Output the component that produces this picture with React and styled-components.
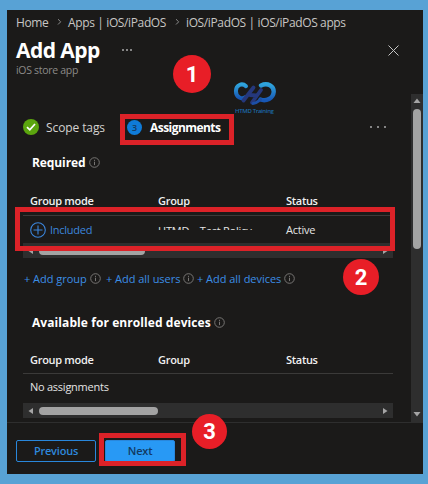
import styled, { createGlobalStyle } from 'styled-components';

const addLinks = [
    { label: '+ Add group', width: 82 },
    { label: '+ Add all users', width: 91 },
    { label: '+ Add all devices', width: 110 },
];

function InfoIcon() {
    return (
        <svg width="11" height="11" viewBox="0 0 11 11" fill="none" stroke="#777573">
            <circle cx="5.5" cy="5.5" r="4.8" />
            <path d="M5.5 4.7v3.4M5.5 2.8v1.1" />
        </svg>
    );
}

function Chevron() {
    return (
        <svg width="5" height="7" viewBox="0 0 5 7" fill="none" stroke="#8a8a8a">
            <path d="M1 .2l2.7 2.6L1 5.5" />
        </svg>
    );
}

function Arrow({ points }) {
    return (
        <svg width="8" height="8" viewBox="0 0 8 8" fill="#a5a5a5">
            <polygon points={points} />
        </svg>
    );
}

function Logo() {
    return (
        <svg width="44" height="26" viewBox="0 0 44 26" fill="none" strokeLinecap="round">
            <defs>
                <linearGradient id="ring" x1="0" y1="0" x2="0" y2="1">
                    <stop offset="0" stopColor="#2fa4dc" />
                    <stop offset="1" stopColor="#1757b5" />
                </linearGradient>
            </defs>
            <path d="M13 5.2C9 1.5 3 4 2.9 10C2.9 16.5 9 19 12.5 16" stroke="url(#ring)" strokeWidth="4" />
            <path d="M28 4.4C35 1.2 41 5.5 40.7 11C40.3 17.5 33 20.5 27.5 18.5" stroke="url(#ring)" strokeWidth="4.4" />
            <path d="M20.5 6.5L10.5 19.5M28 9L19 21.5M17 14L23 14.5" stroke="#25387c" strokeWidth="3.8" />
            <path d="M27.5 18.5C25 20 23.5 22.5 20 22.5" stroke="#1c4fa6" strokeWidth="3" />
        </svg>
    );
}

function HorizontalBar({ thumb }) {
    return (
        <BarTrack>
            <Arrow points="6,1 6,7 1.5,4" />
            <BarThumb $width={thumb} />
            <Arrow points="2,1 2,7 6.5,4" />
        </BarTrack>
    );
}

function HeadRow({ height }) {
    return (
        <TableHead $height={height}>
            <span>Group mode</span>
            <span>Group</span>
            <span>Status</span>
        </TableHead>
    );
}

export default function App() {
    return (
        <Page>
            <GlobalStyle />
            <Blade>
                <Breadcrumb>
                    <Crumb $width={40}>Home</Crumb>
                    <Chevron />
                    <Crumb $width={106}>Apps | iOS/iPadOS</Crumb>
                    <Chevron />
                    <Crumb $width={170}>iOS/iPadOS | iOS/iPadOS apps</Crumb>
                </Breadcrumb>

                <TitleRow>
                    <Title>Add App</Title>
                    <Dots $gap={2} $size={2}>
                        <i />
                        <i />
                        <i />
                    </Dots>
                    <CloseButton aria-label="Close">
                        <svg width="11" height="11" viewBox="0 0 11 11" stroke="#c4c4c4">
                            <path d="M.5 .5l10 10M10.5 .5l-10 10" />
                        </svg>
                    </CloseButton>
                </TitleRow>
                <Subtitle>iOS store app</Subtitle>

                <Body>
                    <Content>
                        <Tabs>
                            <Step $color="#5ba50e" $size={16}>
                                <svg width="10" height="10" viewBox="0 0 10 10" fill="none" stroke="#fff" strokeWidth="1.7">
                                    <path d="M1 5.2l2.8 2.6L9 2" />
                                </svg>
                            </Step>
                            <TabLabel $width={81}>Scope tags</TabLabel>
                            <Step $color="#0f7bd8" $size={15}>3</Step>
                            <TabLabel $active>Assignments</TabLabel>
                            <Dots $gap={5} $size={2}>
                                <i />
                                <i />
                                <i />
                            </Dots>
                        </Tabs>

                        <SectionTitle $spacing="-0.1px">
                            Required <InfoIcon />
                        </SectionTitle>
                        <HeadRow height={45} />
                        <TableRow $height={27}>
                            <Included>
                                <svg width="16" height="16" viewBox="0 0 16 16" fill="none" stroke="#3b86dc" strokeWidth="1.1">
                                    <circle cx="8" cy="8" r="7.3" />
                                    <path d="M8 3.5v9M3.5 8h9" />
                                </svg>
                                Included
                            </Included>
                            <ClippedName>HTMD – Test Policy</ClippedName>
                            <span>Active</span>
                        </TableRow>
                        <HorizontalBar thumb={106} />

                        <LinkRow>
                            {addLinks.map(({ label, width }) => (
                                <AddLink key={label} $width={width}>
                                    <span>{label}</span>
                                    <InfoIcon />
                                </AddLink>
                            ))}
                        </LinkRow>

                        <SectionTitle $spacing="0.08px">
                            Available for enrolled devices <InfoIcon />
                        </SectionTitle>
                        <HeadRow height={43} />
                        <TableRow $height={29} $lift={4}>
                            <span>No assignments</span>
                        </TableRow>
                        <HorizontalBar thumb={119} />
                    </Content>
                    <SideBar>
                        <Arrow points="0.5,6 7.5,6 4,1.5" />
                        <SideThumb />
                        <Arrow points="0.5,2 7.5,2 4,6.5" />
                    </SideBar>
                </Body>

                <Footer>
                    <Button $width={80}>Previous</Button>
                    <Button $width={70} $primary>
                        Next
                    </Button>
                </Footer>
            </Blade>

            <Watermark>
                <Logo />
                <span>HTMD Training</span>
            </Watermark>
            <Highlight $x={120} $y={114} $w={114} $h={31} />
            <Highlight $x={15} $y={207} $w={380} $h={44} />
            <Highlight $x={99} $y={433} $w={87} $h={33} />
            <Marker $x={173} $y={55} $size={38}>1</Marker>
            <Marker $x={343} $y={259} $size={36}>2</Marker>
            <Marker $x={192} $y={414} $size={35}>3</Marker>
        </Page>
    );
}

// styled-components
const GlobalStyle = createGlobalStyle`
    * {
        box-sizing: border-box;
    }

    body {
        margin: 0;
        background: #58a2d5;
        font-family: 'Open Sans', 'Noto Sans', sans-serif;
    }

    svg {
        display: block;
        flex-shrink: 0;
    }
`;

const Page = styled.div`
    position: relative;
    width: 428px;
    height: 484px;
    padding: 10px 5px 10px 7px;
    background: #58a2d5;
    overflow: hidden;
`;

const Blade = styled.main`
    display: flex;
    flex-direction: column;
    height: 464px;
    background: #1b1a19;
    color: #e4e4e4;
    white-space: nowrap;
`;

const Breadcrumb = styled.nav`
    display: flex;
    align-items: center;
    height: 24px;
    padding-left: 9px;
    color: #c8c6c4;
    font-size: 12px;
    gap: 6px;
`;

const Crumb = styled.span`
    width: ${({ $width }) => $width - 5}px;
    flex-shrink: 0;
    letter-spacing: -0.37px;
`;

const TitleRow = styled.header`
    display: flex;
    align-items: center;
    height: 32px;
    padding: 0 24px 0 9px;
`;

const Title = styled.h1`
    width: 106px;
    margin: 0;
    color: #fff;
    font-size: 21px;
    font-weight: 700;
    letter-spacing: -0.55px;
`;

const Dots = styled.div`
    display: flex;
    gap: ${({ $gap }) => $gap}px;

    i {
        width: ${({ $size }) => $size}px;
        height: ${({ $size }) => $size}px;
        border-radius: 50%;
        background: #aaa;
    }
`;

const CloseButton = styled.button`
    margin-left: auto;
    padding: 0;
    border: 0;
    background: none;
`;

const Subtitle = styled.div`
    height: 28px;
    padding-left: 9px;
    color: #8c8a88;
    font-size: 10.5px;
    line-height: 9px;
    letter-spacing: -0.3px;
`;

const Body = styled.div`
    display: flex;
    height: 328px;
`;

const Content = styled.section`
    width: 404px;
    padding: 24px 18px 0 16px;
`;

const Tabs = styled.div`
    display: flex;
    align-items: center;
    height: 18px;
    padding-right: 7px;

    ${Dots} {
        margin-left: auto;
    }
`;

const Step = styled.span`
    display: flex;
    align-items: center;
    justify-content: center;
    width: ${({ $size }) => $size}px;
    height: ${({ $size }) => $size}px;
    margin-right: 7px;
    border-radius: 50%;
    background: ${({ $color }) => $color};
    color: #153a63;
    font-size: 9px;
    font-weight: 600;
`;

const TabLabel = styled.span`
    width: ${({ $width }) => ($width ? `${$width}px` : 'auto')};
    margin-left: ${({ $active }) => ($active ? 1 : 0)}px;
    color: ${({ $active }) => ($active ? '#fff' : '#d4d2d0')};
    font-size: 12px;
    font-weight: ${({ $active }) => ($active ? 700 : 400)};
    letter-spacing: ${({ $active }) => ($active ? '-0.55px' : '-0.1px')};
`;

const SectionTitle = styled.h2`
    display: flex;
    align-items: center;
    gap: 3px;
    height: 18px;
    margin: 17px 0 0;
    padding-left: 9px;
    color: #fff;
    font-size: 12px;
    font-weight: 700;
    letter-spacing: ${({ $spacing }) => $spacing};
`;

const TableHead = styled.div`
    display: grid;
    grid-template-columns: 128px 128px 1fr;
    align-items: center;
    height: ${({ $height }) => $height}px;
    padding: 14px 0 0 7px;
    border-bottom: 1px solid #3b3a39;
    color: #f1f1f1;
    font-size: 11px;
    font-weight: 600;
    letter-spacing: -0.3px;
`;

const TableRow = styled.div`
    display: grid;
    grid-template-columns: 128px 128px 1fr;
    align-items: center;
    height: ${({ $height }) => $height}px;
    padding: 0 0 ${({ $lift = 0 }) => $lift}px 7px;
    font-size: 11px;
    letter-spacing: -0.25px;
`;

const Included = styled.span`
    display: flex;
    align-items: center;
    gap: 4px;
    color: #3b86dc;
`;

const ClippedName = styled.span`
    height: 4px;
    margin-bottom: 4px;
    line-height: 10px;
    letter-spacing: -0.2px;
    overflow: hidden;
`;

const BarTrack = styled.div`
    display: flex;
    align-items: center;
    height: 15px;
    padding: 0 4px;
    background: #2e2e2e;

    svg:last-child {
        margin-left: auto;
    }
`;

const BarThumb = styled.div`
    width: ${({ $width }) => $width}px;
    height: 8px;
    margin-left: 4px;
    border-radius: 4px;
    background: #a3a3a3;
`;

const LinkRow = styled.div`
    display: flex;
    height: 38px;
    padding: 3px 0 0 1px;
`;

const AddLink = styled.a`
    display: flex;
    align-items: center;
    width: ${({ $width }) => $width}px;
    color: #3b8ee6;
    font-size: 11px;
    letter-spacing: -0.03px;
    gap: 3px;
`;

const SideBar = styled.div`
    display: flex;
    flex-direction: column;
    align-items: center;
    width: 12px;
    padding: 3px 0 4px;
    background: #2e2e2e;

    svg:last-child {
        margin-top: auto;
    }
`;

const SideThumb = styled.div`
    width: 8px;
    height: 140px;
    margin-top: 4px;
    border-radius: 4px;
    background: #a3a3a3;
`;

const Footer = styled.footer`
    display: flex;
    gap: 9px;
    height: 52px;
    padding: 17px 0 0 9px;
    border-top: 1px solid #2e2e2e;
`;

const Button = styled.button`
    width: ${({ $width }) => $width}px;
    height: 22px;
    padding: 0 0 2px;
    border: 1px solid #2987dc;
    border-radius: 2px;
    background: ${({ $primary }) => ($primary ? '#2899f5' : 'transparent')};
    color: ${({ $primary }) => ($primary ? '#123a63' : '#2e88dc')};
    font-family: inherit;
    font-size: 11px;
    font-weight: 600;
    letter-spacing: -0.2px;
`;

const Watermark = styled.div`
    position: absolute;
    left: 233px;
    top: 81px;
    color: #1c69a8;
    font-size: 6px;
    font-weight: 600;
    line-height: 8px;
    letter-spacing: -0.35px;
    white-space: nowrap;

    span {
        display: block;
        padding-left: 2px;
    }
`;

const Highlight = styled.div`
    position: absolute;
    left: ${({ $x }) => $x}px;
    top: ${({ $y }) => $y}px;
    width: ${({ $w }) => $w}px;
    height: ${({ $h }) => $h}px;
    border: 5px solid #dc2228;
`;

const Marker = styled.div`
    position: absolute;
    left: ${({ $x }) => $x}px;
    top: ${({ $y }) => $y}px;
    display: flex;
    align-items: center;
    justify-content: center;
    width: ${({ $size }) => $size}px;
    height: ${({ $size }) => $size}px;
    border-radius: 50%;
    background: #e81e27;
    color: #fff;
    font-family: Roboto, 'Liberation Sans', sans-serif;
    font-size: 22px;
    font-weight: 700;
`;
